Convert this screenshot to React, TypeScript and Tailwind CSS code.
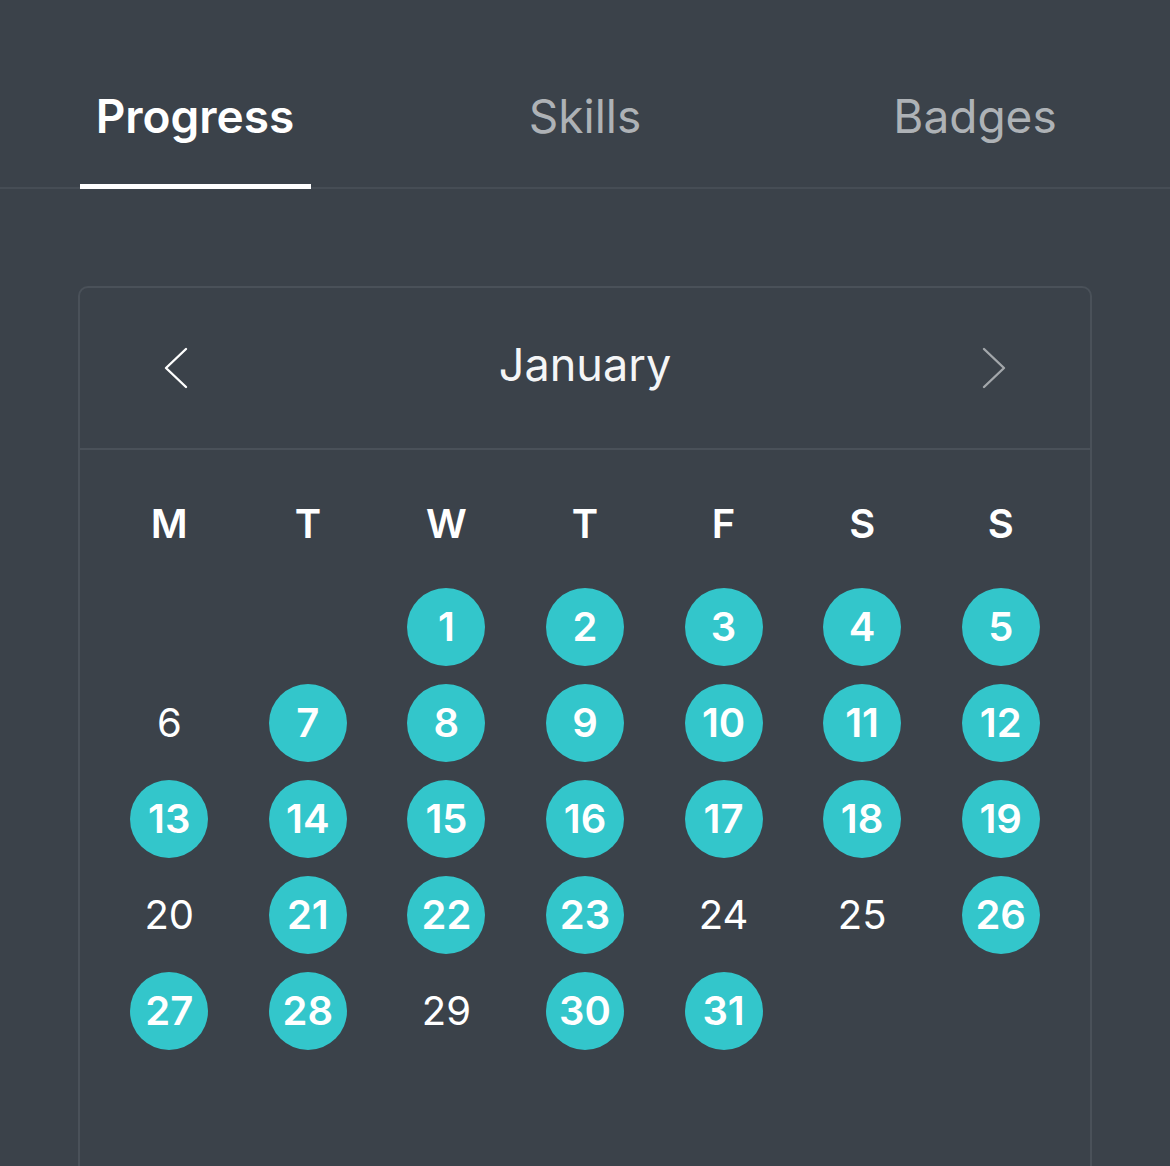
import React from "react"

const tabs = ["Progress", "Skills", "Badges"]
const weekDays = ["M", "T", "W", "T", "F", "S", "S"]
const doneDays = [1, 2, 3, 4, 5, 7, 8, 9, 10, 11, 12, 13, 14, 15, 16, 17, 18, 19, 21, 22, 23, 26, 27, 28, 30, 31]

const ChevronLeft = ({ className }: { className?: string }) => (
  <svg viewBox="0 0 24 42" className={className} fill="none" stroke="currentColor" strokeWidth={2.4} strokeLinecap="round" strokeLinejoin="round">
    <path d="M22 2 L2 21 L22 40" />
  </svg>
)

const ChevronRight = ({ className }: { className?: string }) => (
  <svg viewBox="0 0 24 42" className={className} fill="none" stroke="currentColor" strokeWidth={2.4} strokeLinecap="round" strokeLinejoin="round">
    <path d="M2 2 L22 21 L2 40" />
  </svg>
)

const App = () => {
  // January starts on a Wednesday, so two blank cells first
  const cells: (number | null)[] = [null, null]
  for (let d = 1; d <= 31; d++) cells.push(d)

  return (
    <div className="w-[1170px] h-[1166px] overflow-hidden bg-[#3b424a] font-['Inter',sans-serif]">
      <div className="flex h-[189px] border-b-2 border-[#464d55]">
        {tabs.map((tab, i) => (
          <div key={tab} className="flex-1 flex flex-col items-center justify-end">
            <span
              className={
                i === 0
                  ? "text-[46px] font-semibold text-white leading-none mb-[45px]"
                  : "text-[46px] font-normal text-[#aeb2b6] leading-none mb-[45px]"
              }
            >
              {tab}
            </span>
            <div className={i === 0 ? "h-[5px] w-[231px] bg-white -mb-[2px]" : "h-[5px] -mb-[2px]"} />
          </div>
        ))}
      </div>

      <div className="mx-[78px] mt-[97px] rounded-[10px] border-2 border-[#4a5159] h-[1000px]">
        <div className="flex items-center justify-between h-[162px] px-[84px] border-b-2 border-[#4a5159]">
          <ChevronLeft className="w-[24px] h-[42px] text-white" />
          <span className="text-[45px] text-[#f4f5f6] leading-none mb-[7px]">January</span>
          <ChevronRight className="w-[24px] h-[42px] text-[#a3a7ab]" />
        </div>

        <div className="px-[20px] pt-[54px]">
          <div className="grid grid-cols-7 mb-[44px]">
            {weekDays.map((d, i) => (
              <div key={i} className="flex justify-center text-[40px] font-semibold text-white leading-none">
                {d}
              </div>
            ))}
          </div>
          <div className="grid grid-cols-7 gap-y-[18px]">
            {cells.map((d, i) => (
              <div key={i} className="flex justify-center items-center h-[78px]">
                {d !== null &&
                  (doneDays.includes(d) ? (
                    <div className="w-[78px] h-[78px] rounded-full bg-[#33c6cb] flex items-center justify-center text-[40px] font-semibold text-white leading-none">
                      {d}
                    </div>
                  ) : (
                    <span className="text-[40px] text-white leading-none">{d}</span>
                  ))}
              </div>
            ))}
          </div>
        </div>
      </div>
    </div>
  )
}

export default App
